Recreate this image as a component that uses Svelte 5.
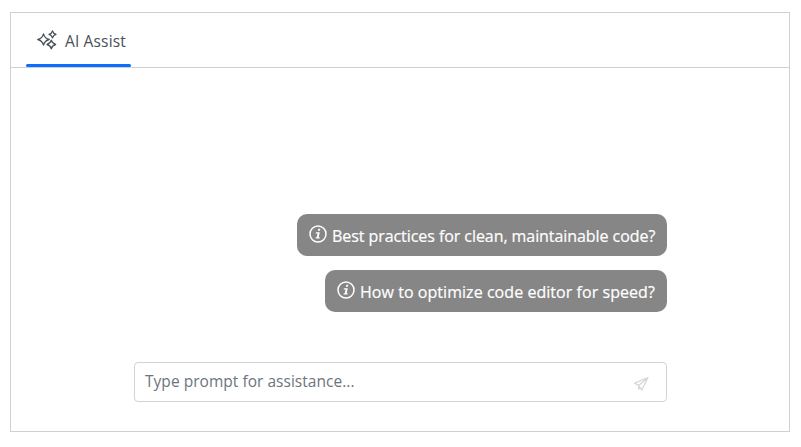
<script>
  const suggestions = [
    { text: 'Best practices for clean, maintainable code?', width: 370, spacing: -0.065 },
    { text: 'How to optimize code editor for speed?', width: 342, spacing: 0.05 }
  ];
</script>

<div class="panel">
  <header>
    <div class="tab">
      <div class="label">
        <svg class="sparkles" width="20" height="20" viewBox="0 0 20 20">
          <path d="M6.5 3.8Q7.7 8.3 12.2 9.5Q7.7 10.7 6.5 15.2Q5.3 10.7 .8 9.5Q5.3 8.3 6.5 3.8Z" />
          <path d="M15.5 .9Q16.2 3.7 19 4.4Q16.2 5.1 15.5 7.9Q14.8 5.1 12 4.4Q14.8 3.7 15.5 .9Z" />
          <path d="M14.3 10.2Q15.2 13.6 18.6 14.5Q15.2 15.4 14.3 18.8Q13.4 15.4 10 14.5Q13.4 13.6 14.3 10.2Z" />
        </svg>
        <span>AI Assist</span>
      </div>
      <div class="underline"></div>
    </div>
  </header>
  <main>
    <div class="suggestions">
      {#each suggestions as item}
        <button style="width: {item.width}px; letter-spacing: {item.spacing}px">
          <svg class="info" width="18" height="18" viewBox="0 0 18 18">
            <circle cx="9" cy="9" r="8" />
            <path class="solid" d="M9.3 3.8h2l-.4 2h-2zM6.9 7.3h3.9l-1.1 5h1.1l-.2 1.1H6.6l.2-1.1h.9l.9-3.9H6.7z" />
          </svg>
          <span>{item.text}</span>
        </button>
      {/each}
    </div>
    <div class="prompt">
      <span>Type prompt for assistance...</span>
      <svg width="16" height="16" viewBox="0 0 16 16">
        <path d="M14.9 1.6L1.6 7.1L5.7 9.4L8.7 14.2L14.9 1.6ZM5.7 9.4L14.9 1.6M5.7 9.4V13.2L7.2 11.8" />
      </svg>
    </div>
  </main>
</div>

<style>
  :global(body) { background: #fff; }
  .panel {
    width: 780px;
    height: 420px;
    margin: 12px 0 0 10px;
    border: 1px solid #cfd0d6;
    font-family: "Open Sans", "Noto Sans", sans-serif;
    font-size: 15.5px;
    line-height: 24px;
    display: flex;
    flex-direction: column;
  }
  .panel, .panel * { box-sizing: border-box; }
  header {
    height: 55px;
    flex: none;
    padding-left: 14.5px;
    display: flex;
    border-bottom: 1px solid #cfd0d6;
  }
  .tab {
    width: 105px;
    display: flex;
    flex-direction: column;
    justify-content: space-between;
  }
  .label {
    padding: 16px 0 0 11.5px;
    display: flex;
    gap: 8px;
    color: #495057;
    white-space: nowrap;
    letter-spacing: .15px;
  }
  .underline { height: 3px; border-radius: 1.5px; background: #0d6efd; }
  .sparkles { flex: none; margin-top: 1px; fill: none; stroke: #495057; stroke-width: 1.3; stroke-linejoin: round; }
  main {
    flex: 1;
    width: 533px;
    margin-left: 123px;
    padding-top: 146px;
  }
  .suggestions { display: flex; flex-direction: column; align-items: flex-end; gap: 14px; }
  button {
    height: 42px;
    border: 0;
    border-radius: 10px;
    padding: 0 0 0 12px;
    display: flex;
    align-items: center;
    gap: 5px;
    background: #868686;
    color: #fff;
    font: inherit;
    font-size: 16px;
    white-space: nowrap;
    -webkit-text-stroke: .2px #fff;
  }
  button span { padding-top: 2px; }
  .info { flex: none; margin-top: -3px; fill: none; stroke: #fff; stroke-width: 1.5; }
  .solid { fill: #fff; stroke: none; }
  .prompt {
    height: 40px;
    margin-top: 50px;
    padding: 0 17px 0 10px;
    border: 1px solid #ced4da;
    border-radius: 4px;
    display: flex;
    align-items: center;
    justify-content: space-between;
    color: #6c757d;
    letter-spacing: .03px;
  }
  .prompt span { margin-top: -3px; }
  .prompt svg { margin-top: 3px; fill: none; stroke: #d6d8db; stroke-width: 1.3; stroke-linejoin: round; }
</style>
